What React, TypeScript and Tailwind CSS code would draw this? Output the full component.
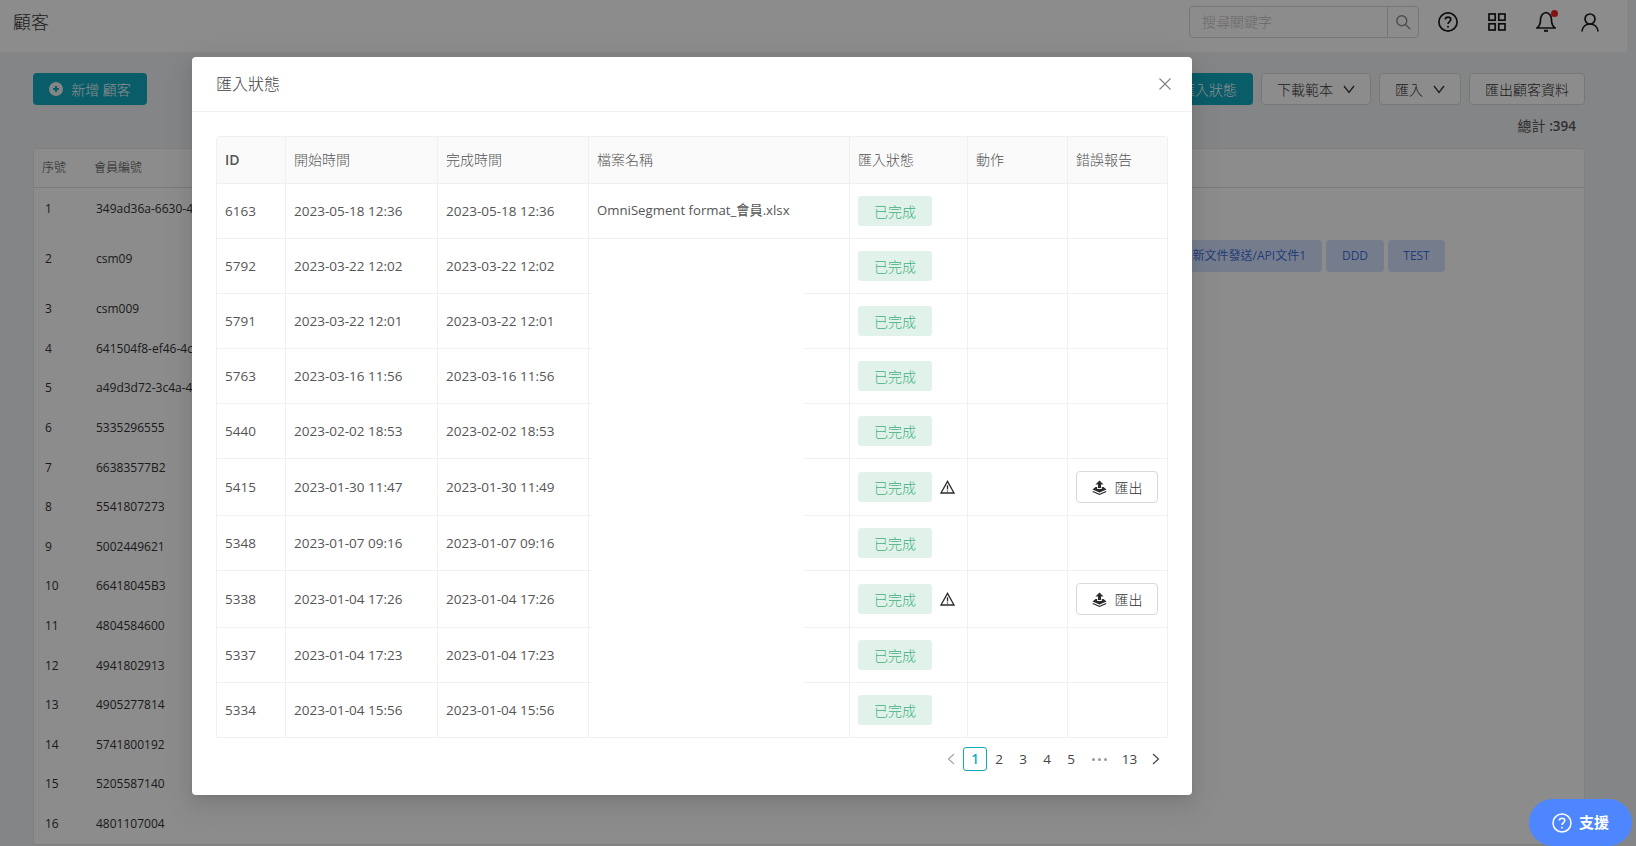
import React from "react";

const modalRows = [
  { id: "6163", s: "2023-05-18 12:36", e: "2023-05-18 12:36", f: "OmniSegment format_會員.xlsx" },
  { id: "5792", s: "2023-03-22 12:02", e: "2023-03-22 12:02" },
  { id: "5791", s: "2023-03-22 12:01", e: "2023-03-22 12:01" },
  { id: "5763", s: "2023-03-16 11:56", e: "2023-03-16 11:56" },
  { id: "5440", s: "2023-02-02 18:53", e: "2023-02-02 18:53" },
  { id: "5415", s: "2023-01-30 11:47", e: "2023-01-30 11:49", err: true },
  { id: "5348", s: "2023-01-07 09:16", e: "2023-01-07 09:16" },
  { id: "5338", s: "2023-01-04 17:26", e: "2023-01-04 17:26", err: true },
  { id: "5337", s: "2023-01-04 17:23", e: "2023-01-04 17:23" },
  { id: "5334", s: "2023-01-04 15:56", e: "2023-01-04 15:56" },
];

const pageRows = [
  "349ad36a-6630-4c1e-8f2a", "csm09", "csm009", "641504f8-ef46-4c3d-9a10", "a49d3d72-3c4a-4b7e-8d21",
  "5335296555", "66383577B2", "5541807273", "5002449621", "66418045B3",
  "4804584600", "4941802913", "4905277814", "5741800192", "5205587140", "4801107004",
];

function Chevron() {
  return (
    <svg width="12" height="12" viewBox="0 0 12 12" fill="none" stroke="currentColor" strokeWidth="1.3">
      <path d="M1 3 L6 9.5 L11 3" />
    </svg>
  );
}

function WarnIcon() {
  return (
    <svg width="15" height="14" viewBox="0 0 15 14" fill="none" stroke="#2b2b2b" strokeWidth="1.3">
      <path d="M7.5 1.4 L14 13 H1 Z" />
      <path d="M7.5 5.2 V9.4" />
      <circle cx="7.5" cy="11" r="0.7" fill="#2b2b2b" stroke="none" />
    </svg>
  );
}

function ExportIcon() {
  return (
    <svg width="15" height="15" viewBox="0 0 15 15" fill="#2b2b2b">
      <path d="M7.5 0.5 L11.5 4.5 H9 V8 H6 V4.5 H3.5 Z" />
      <path d="M3.5 7 L0.5 9.5 L7.5 12.5 L14.5 9.5 L11.5 7 L9.8 7 V9 H5.2 V7 Z" />
      <path d="M1 11 L7.5 13.8 L14 11 L14.5 12 L7.5 15 L0.5 12 Z" />
    </svg>
  );
}

function Th({ children, className = "" }: { children: React.ReactNode; className?: string }) {
  return (
    <th className={`h-[47px] border-r border-b border-[#f0f0f0] bg-[#fafafa] px-2 pb-[2px] text-left text-[14px] text-[#555] ${className}`}>
      {children}
    </th>
  );
}

function Td({ children, className = "text-[13.5px]" }: { children?: React.ReactNode; className?: string }) {
  return <td className={`border-r border-b border-[#f0f0f0] px-2 text-[#555] ${className}`}>{children}</td>;
}

function ToolBtn({ children }: { children: React.ReactNode }) {
  return (
    <div className="flex h-8 items-center gap-[10px] rounded border border-[#d9d9d9] bg-white px-[15px] text-[14px] font-light text-[#333]">
      {children}
    </div>
  );
}

export default function App() {
  return (
    <div className="relative h-[846px] w-[1636px] overflow-hidden bg-[#f0f2f5] font-['Open_Sans','Noto_Sans_CJK_TC',sans-serif]">
      {/* page */}
      <header className="flex h-[52px] w-[1627px] items-center bg-white pb-2 pl-[13px]">
        <div className="text-[18px] font-light text-[#333]">顧客</div>
        <div className="ml-auto flex h-[32px] w-[230px] items-stretch rounded border border-[#d9d9d9] bg-white">
          <div className="flex-1 pl-3 text-[14px] font-light leading-[30px] text-[#bfbfbf]">搜尋關鍵字</div>
          <div className="flex w-[31px] items-center justify-center border-l border-[#d9d9d9]">
            <svg width="16" height="16" viewBox="0 0 16 16" fill="none" stroke="#8c8c8c" strokeWidth="1.4">
              <circle cx="6.8" cy="6.8" r="5" />
              <path d="M10.5 10.5 L15 15" />
            </svg>
          </div>
        </div>
        <div className="ml-[19px] flex items-center">
          <svg width="20" height="20" viewBox="0 0 20 20" fill="none" stroke="#1a1a1a" strokeWidth="1.7">
            <circle cx="10" cy="10" r="9.1" />
            <path d="M7.3 7.6 C7.3 4.4 12.8 4.4 12.8 7.6 C12.8 9.6 10 9.6 10 12" />
            <circle cx="10" cy="14.7" r="1" fill="#1a1a1a" stroke="none" />
          </svg>
          <svg className="ml-[30px]" width="18" height="18" viewBox="0 0 18 18" fill="none" stroke="#1a1a1a" strokeWidth="1.7">
            <rect x="1" y="1" width="6.2" height="6.2" />
            <rect x="10.8" y="1" width="6.2" height="6.2" />
            <rect x="1" y="10.8" width="6.2" height="6.2" />
            <rect x="10.8" y="10.8" width="6.2" height="6.2" />
          </svg>
          <div className="relative ml-[30px] h-[22px] w-[20px]">
            <svg width="20" height="22" viewBox="0 0 20 22" fill="none" stroke="#1a1a1a" strokeWidth="1.7">
              <path d="M10 1.5 C5.5 2.5 4.5 6 4.5 9 C4.5 13 3.5 15 1 17 H19 C16.5 15 15.5 13 15.5 9 C15.5 6 14.5 2.5 10 1.5 Z" />
              <path d="M8 19.8 H12" strokeWidth="2" />
            </svg>
            <span className="absolute right-[-2px] top-[-1px] h-[7px] w-[7px] rounded-full bg-[#ee2222]" />
          </div>
          <svg className="ml-[25px]" width="18" height="19" viewBox="0 0 18 19" fill="none" stroke="#1a1a1a" strokeWidth="1.7">
            <circle cx="9" cy="6" r="5" />
            <path d="M1 18.5 C1.5 13.5 5 11 9 11 C13 11 16.5 13.5 17 18.5" />
          </svg>
        </div>
        <div className="w-[28px]" />
      </header>

      <main className="w-[1627px] pl-[33px] pr-[42px] pt-[21px]">
        <div className="flex items-center">
          <div className="flex h-8 w-[114px] items-center justify-center gap-2 rounded bg-[#12a9bf] text-[14px] font-light text-white">
            <svg width="14" height="14" viewBox="0 0 14 14">
              <circle cx="7" cy="7" r="7" fill="#f2f2f2" />
              <path d="M7 4 V10 M4 7 H10" stroke="#12a9bf" strokeWidth="2" />
            </svg>
            <span>新增 顧客</span>
          </div>
          <div className="ml-auto flex items-center gap-2">
            <div className="flex h-8 items-center rounded bg-[#12a9bf] px-4 text-[14px] font-light text-white">匯入狀態</div>
            <ToolBtn>
              下載範本
              <Chevron />
            </ToolBtn>
            <ToolBtn>
              匯入
              <Chevron />
            </ToolBtn>
            <ToolBtn>匯出顧客資料</ToolBtn>
          </div>
        </div>

        <div className="mt-[11px] pr-[9px] text-right text-[14px] leading-[20px] text-[#595959]">
          總計 <span className="text-[13.5px] font-semibold">:394</span>
        </div>

        <div className="mt-[12px] rounded-t border border-[#e8e8e8] bg-white">
          <div className="flex h-[39px] items-center border-b border-[#e0e0e0] text-[12px] font-light text-[#444]">
            <div className="w-[60px] pl-2">序號</div>
            <div>會員編號</div>
          </div>
          {pageRows.map((r, i) => (
            <div
              key={i}
              className={`flex items-center text-[12px] text-[#333] ${i === 0 ? "h-[41px]" : i === 1 ? "h-[60px]" : i === 2 ? "h-[40px]" : "h-[39.6px]"}`}
            >
              <div className="w-[62px] pl-[11px]">{i + 1}</div>
              <div className="whitespace-nowrap">{r}</div>
              {i === 1 && (
                <div className="mb-[6px] ml-auto mr-[139px] flex gap-1 text-[12px] text-[#3f6fe0]">
                  <div className="flex h-8 items-center rounded bg-[#d6e4ff] px-4">新文件發送/API文件1</div>
                  <div className="flex h-8 w-[58px] items-center justify-center rounded bg-[#d6e4ff]">DDD</div>
                  <div className="flex h-8 w-[57px] items-center justify-center rounded bg-[#d6e4ff]">TEST</div>
                </div>
              )}
            </div>
          ))}
        </div>
      </main>

      {/* mask and dialog */}
      <div className="absolute inset-0 bg-black/45">
        <div className="ml-[192px] mt-[57px] w-[1000px] rounded bg-white shadow-[0_3px_6px_-4px_rgba(0,0,0,0.12),0_6px_16px_0_rgba(0,0,0,0.08),0_9px_28px_8px_rgba(0,0,0,0.05)]">
          <div className="flex h-[55px] items-center justify-between border-b border-[#f0f0f0] pl-6 pr-[21px] text-[16px] font-light text-[#444]">
            <span>匯入狀態</span>
            <svg width="12" height="12" viewBox="0 0 12 12" fill="none" stroke="#808080" strokeWidth="1.1">
              <path d="M0.5 0.5 L11.5 11.5 M11.5 0.5 L0.5 11.5" />
            </svg>
          </div>
          <div className="px-6 pb-6 pt-6">
            <div className="relative rounded-t-sm border-l border-t border-[#f0f0f0]">
              <table className="w-full table-fixed border-separate border-spacing-0">
                <colgroup>
                  <col className="w-[69px]" />
                  <col className="w-[152px]" />
                  <col className="w-[151px]" />
                  <col className="w-[261px]" />
                  <col className="w-[118px]" />
                  <col className="w-[100px]" />
                  <col />
                </colgroup>
                <thead>
                  <tr>
                    <Th className="font-semibold">ID</Th>
                    <Th className="font-light">開始時間</Th>
                    <Th className="font-light">完成時間</Th>
                    <Th className="font-light">檔案名稱</Th>
                    <Th className="font-light">匯入狀態</Th>
                    <Th className="font-light">動作</Th>
                    <Th className="font-light">錯誤報告</Th>
                  </tr>
                </thead>
                <tbody>
                  {modalRows.map((r) => (
                    <tr key={r.id} className={r.err ? "h-[57px]" : "h-[55px]"}>
                      <Td>{r.id}</Td>
                      <Td>{r.s}</Td>
                      <Td>{r.e}</Td>
                      <Td className="whitespace-nowrap text-[13.2px]">{r.f}</Td>
                      <Td>
                        <div className="flex items-center gap-2">
                          <span className="flex h-[30px] w-[74px] items-center justify-center rounded-[3px] bg-[#e0f2e9] text-[14px] font-light text-[#42b07f]">
                            已完成
                          </span>
                          {r.err && <WarnIcon />}
                        </div>
                      </Td>
                      <Td />
                      <Td>
                        {r.err && (
                          <div className="flex h-8 w-[82px] items-center justify-center gap-2 rounded border border-[#d9d9d9] bg-white text-[14px] font-light text-[#333]">
                            <ExportIcon />
                            <span>匯出</span>
                          </div>
                        )}
                      </Td>
                    </tr>
                  ))}
                </tbody>
              </table>
              <div className="absolute left-[374px] top-[102px] h-[498px] w-[213px] bg-white" />
            </div>
            <div className="mt-[9px] flex h-6 items-center justify-end text-[13.5px] text-[#444]">
              <div className="flex h-6 w-6 items-center justify-center">
                <svg width="8" height="12" viewBox="0 0 8 12" fill="none" stroke="#a6a6a6" strokeWidth="1.2">
                  <path d="M7 1 L1.5 6 L7 11" />
                </svg>
              </div>
              <div className="flex h-6 w-6 items-center justify-center rounded-[3px] border border-[#12a9bf] font-semibold text-[#12a9bf]">1</div>
              {["2", "3", "4", "5"].map((p) => (
                <div key={p} className="flex h-6 w-6 items-center justify-center">
                  {p}
                </div>
              ))}
              <div className="flex h-6 w-8 items-center justify-center gap-[3px]">
                <span className="h-[3px] w-[3px] rounded-full bg-[#999]" />
                <span className="h-[3px] w-[3px] rounded-full bg-[#999]" />
                <span className="h-[3px] w-[3px] rounded-full bg-[#999]" />
              </div>
              <div className="flex h-6 w-[29px] items-center justify-center">13</div>
              <div className="flex h-6 w-6 items-center justify-center">
                <svg width="8" height="12" viewBox="0 0 8 12" fill="none" stroke="#444" strokeWidth="1.2">
                  <path d="M1 1 L6.5 6 L1 11" />
                </svg>
              </div>
            </div>
          </div>
        </div>
      </div>

      {/* support button */}
      <div className="absolute bottom-0 left-[1529px] flex h-[47px] w-[103px] items-center justify-center gap-[7px] rounded-[24px] bg-[#4d86ff] text-[15px] font-semibold text-white">
        <svg width="20" height="20" viewBox="0 0 20 20" fill="none" stroke="#fff" strokeWidth="1.5">
          <circle cx="10" cy="10" r="9" />
          <path d="M7.3 7.6 C7.3 4.4 12.8 4.4 12.8 7.6 C12.8 9.6 10 9.6 10 12" />
          <circle cx="10" cy="14.7" r="0.9" fill="#fff" stroke="none" />
        </svg>
        <span>支援</span>
      </div>
    </div>
  );
}
